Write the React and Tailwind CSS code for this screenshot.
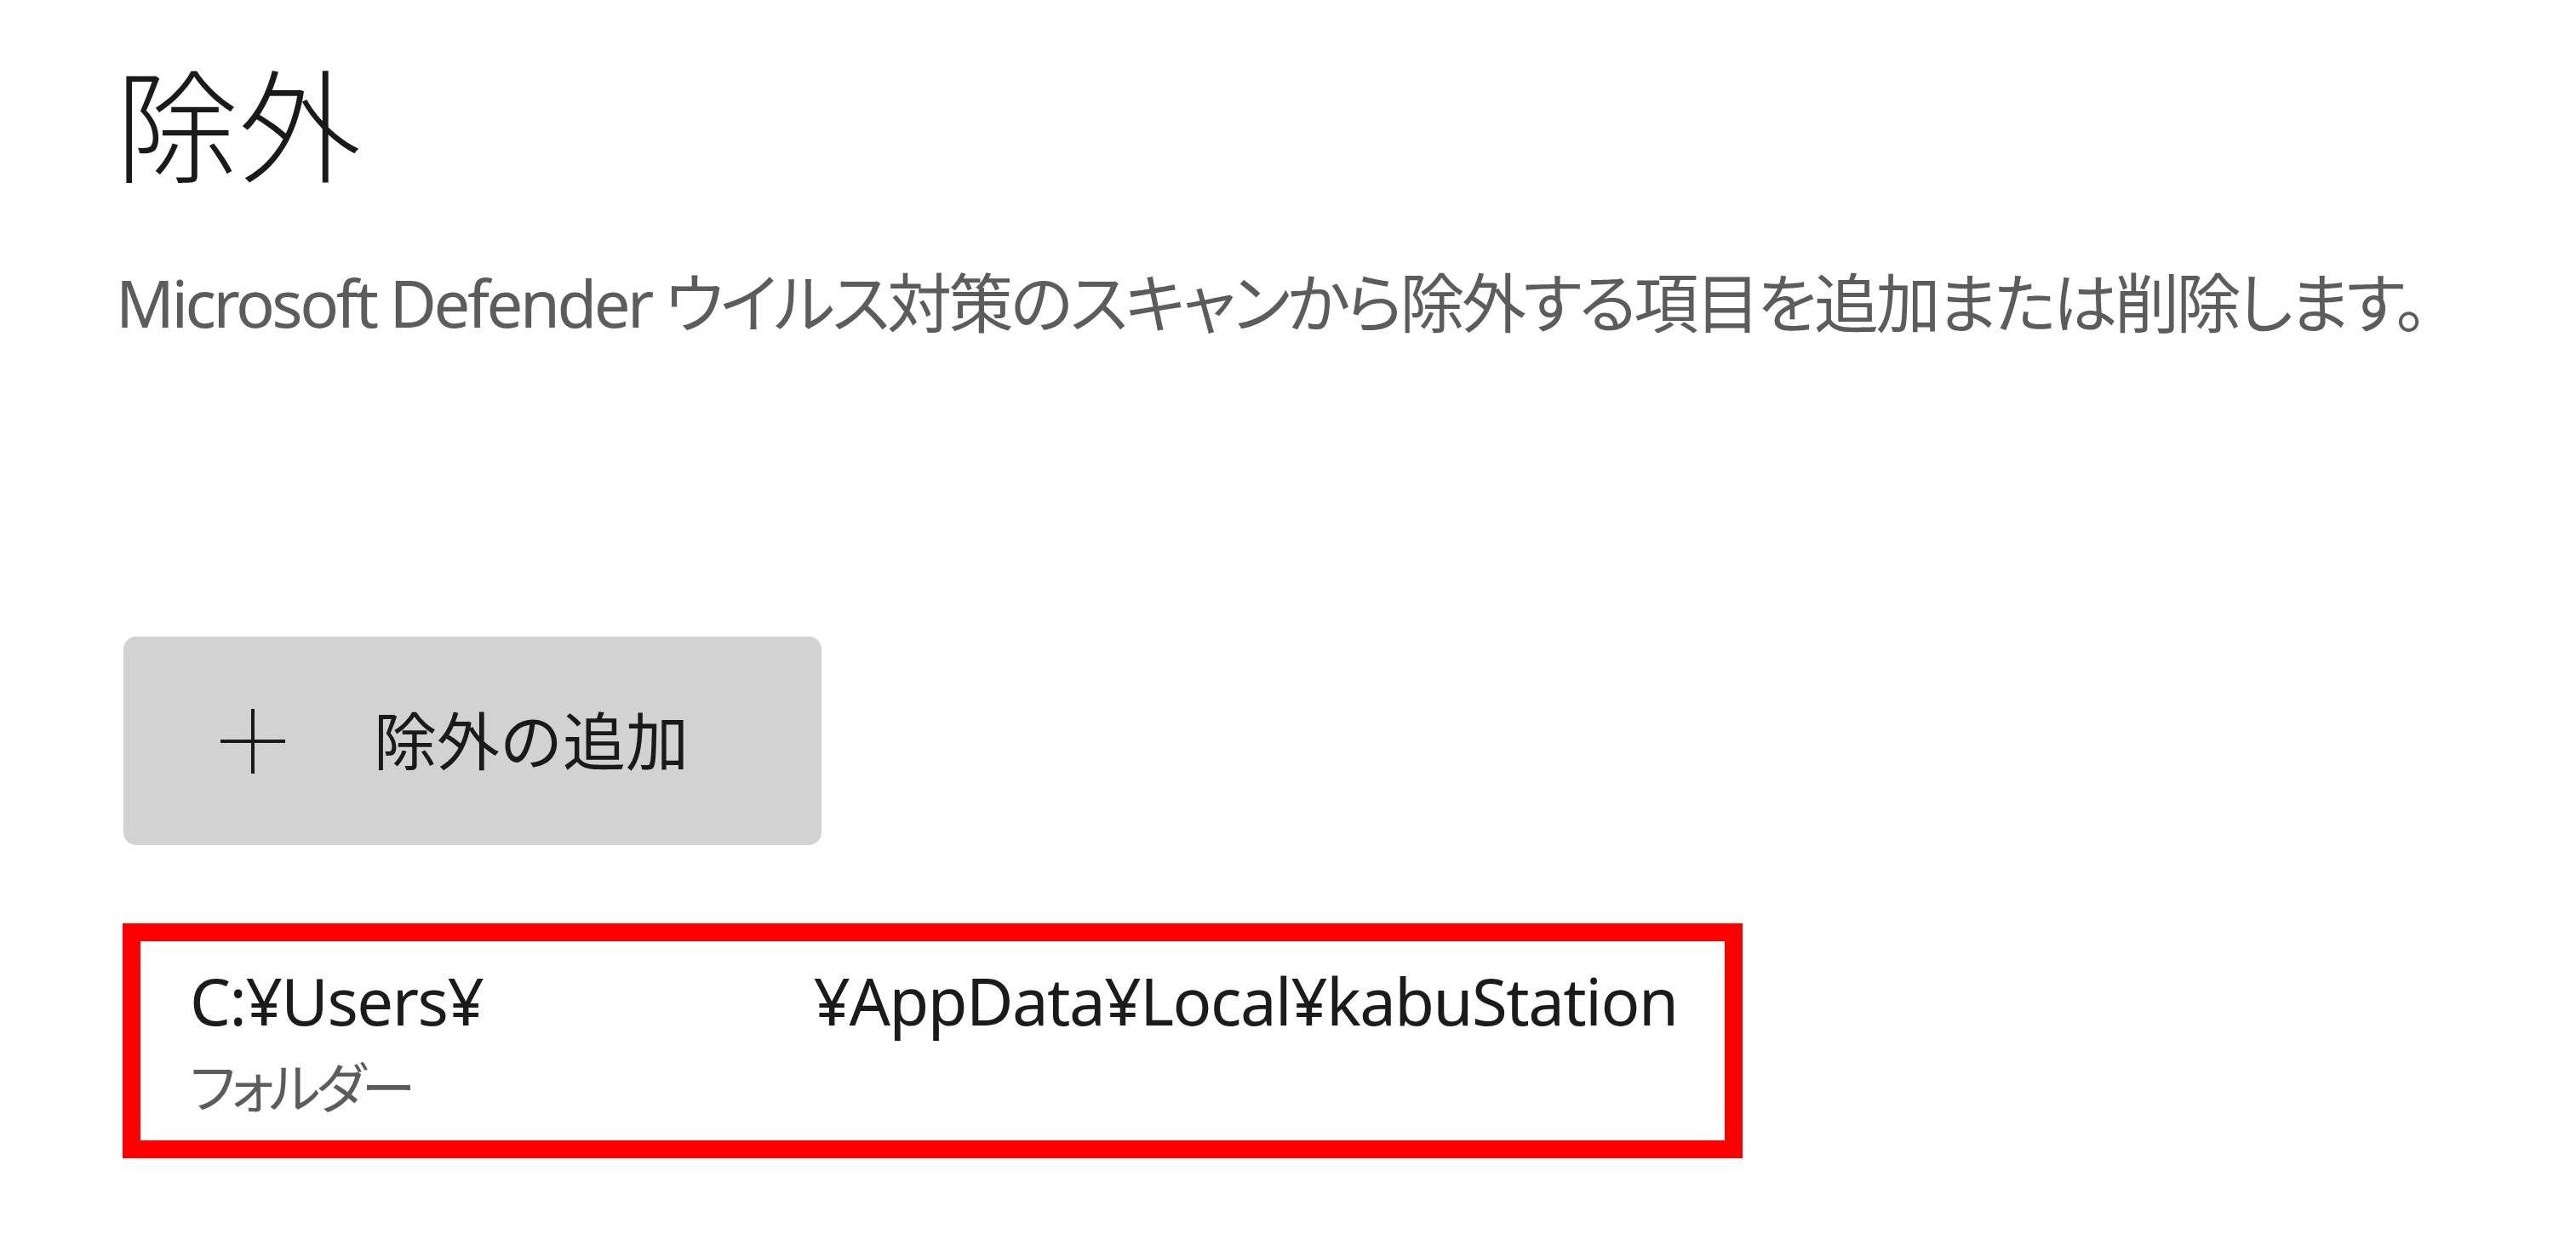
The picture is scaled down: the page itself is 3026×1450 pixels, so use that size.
const fontStack = "font-['Noto_Sans','Noto_Sans_CJK_JP',sans-serif]";

function PlusIcon() {
  return (
    <svg width="80" height="80" viewBox="0 0 80 80" className="shrink-0">
      <path d="M40 2v76M2 40h76" stroke="#1a1a1a" strokeWidth="4" fill="none" />
    </svg>
  );
}

export default function App() {
  return (
    <div className={`min-h-screen w-full bg-white text-[#1b1b1b] ${fontStack}`}>
      <div className="pl-[136px] pt-[76px]">
        {/* page title */}
        <h1 className="text-[144px] leading-none font-light text-[#1a1a1a]">除外</h1>

        {/* description */}
        <p className="mt-[98px] whitespace-nowrap text-[76px] leading-none text-[#5c5c5c] [font-feature-settings:'palt'] tracking-[-3.5px]">
          Microsoft Defender ウイルス対策のスキャンから除外する項目を追加または削除します。
        </p>

        {/* add exclusion button */}
        <button className="mt-[354px] ml-[9px] flex h-[245px] w-[820px] items-center rounded-[15px] bg-[#d2d2d2] pl-[112px]">
          <PlusIcon />
          <span className="ml-[102px] text-[74px] leading-none text-[#1a1a1a]">除外の追加</span>
        </button>

        {/* excluded folder item, highlighted */}
        <div className="mt-[92px] ml-[8px] h-[276px] w-[1903px] border-[21px] border-[#ff0000] bg-white pl-[58px] pt-[32px]">
          <div className="flex whitespace-nowrap text-[76px] leading-none tracking-[-1.5px] text-[#1b1b1b]">
            <span className="shrink-0">C:¥Users¥</span>
            <span className="ml-[388px] shrink-0">¥AppData¥Local¥kabuStation</span>
          </div>
          <div className="mt-[32px] text-[64px] leading-none tracking-[-5px] text-[#5c5c5c] [font-feature-settings:'palt']">フォルダー</div>
        </div>
      </div>
    </div>
  );
}
